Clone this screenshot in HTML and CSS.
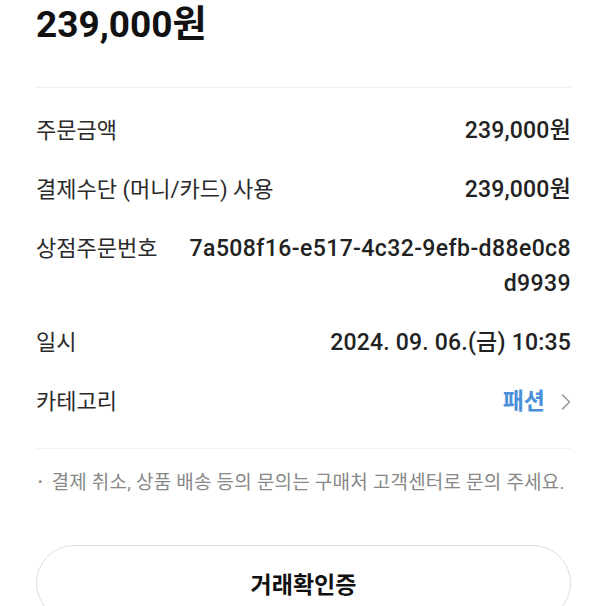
FILE: index.html
```html
<!DOCTYPE html>
<html lang="ko">
<head>
  <meta charset="UTF-8" />
  <meta name="viewport" content="width=device-width, initial-scale=1.0"/>
  <title>결제 상세</title>
  <link rel="stylesheet" href="styles.css">
</head>
<body>
  <div class="container">
    <h1 class="total">239,000원</h1>

    <div class="details">
      <div class="line"><span class="label">주문금액</span><strong class="value">239,000원</strong></div>
      <div class="line"><span class="label">결제수단 (머니/카드) 사용</span><strong class="value">239,000원</strong></div>
      <div class="line"><span class="label">상점주문번호</span><strong class="value id">7a508f16-e517-4c32-9efb-d88e0c8d9939</strong></div>
      <div class="line"><span class="label">일시</span><strong class="value">2024. 09. 06.(금) 10:35</strong></div>
      <div class="line">
        <span class="label">카테고리</span>
        <a class="category" href="#">패션
          <svg width="10" height="18" viewBox="0 0 10 18"><path d="M1.5 2 L8.5 9 L1.5 16" fill="none" stroke="#999" stroke-width="1.6" stroke-linecap="round" stroke-linejoin="round"/></svg>
        </a>
      </div>
    </div>

    <p class="note">결제 취소, 상품 배송 등의 문의는 구매처 고객센터로 문의 주세요.</p>

    <button class="receipt">거래확인증</button>
  </div>
</body>
</html>
```

FILE: styles.css
```css
body {
  font-family: Roboto, "Noto Sans CJK KR", sans-serif;
  background: #fff;
  color: #222;
  margin: 0;
}
.container {
  padding: 0 35px 0 36px;
}
.total {
  margin: 0 0 37px;
  font-size: 37px;
  line-height: 50px;
  font-weight: 700;
  color: #111;
}
.details {
  border-top: 1px solid #eee;
  border-bottom: 1px solid #f2f2f2;
  padding: 13px 0 17px;
}
.line {
  display: flex;
  justify-content: space-between;
  align-items: flex-start;
  padding: 12px 0;
  line-height: 35px;
}
.label {
  flex-shrink: 0;
  font-size: 22px;
  color: #2a2a2a;
  margin-right: 28px;
}
.value {
  font-size: 23px;
  font-weight: 500;
  letter-spacing: 0.2px;
  color: #222;
  text-align: right;
}
.value.id {
  word-break: break-all;
  letter-spacing: 0.4px;
}
.category {
  display: flex;
  align-items: center;
  gap: 16px;
  font-size: 23px;
  font-weight: 700;
  color: #4a8fd8;
  text-decoration: none;
}
.note {
  margin: 21px 0 0;
  font-size: 19px;
  line-height: 24px;
  letter-spacing: 0.2px;
  color: #888;
}
.note::before {
  content: "•";
  margin: 0 9px 0 2px;
  font-size: 13px;
  vertical-align: 3px;
}
.receipt {
  display: block;
  width: 100%;
  height: 76px;
  margin-top: 50px;
  background: #fff;
  border: 1px solid #ddd;
  border-radius: 38px;
  font-family: Roboto, "Noto Sans CJK KR", sans-serif;
  font-size: 23px;
  font-weight: 700;
  color: #111;
}
```
